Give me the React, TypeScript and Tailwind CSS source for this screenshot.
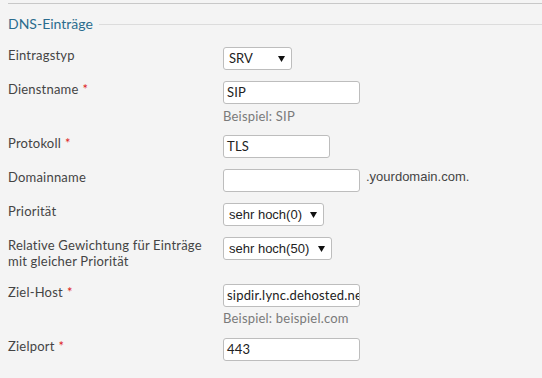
import React from "react";

const labelFont = { fontFamily: "Lato, 'Liberation Sans', sans-serif" };

function Label({ text, req }: { text: React.ReactNode; req?: boolean }) {
  return (
    <div className="w-[215px] shrink-0 text-[13px] leading-[16px] tracking-[0.2px] text-[#444]">
      {text}
      {req && <span className="text-[#d22] ml-[4px]">*</span>}
    </div>
  );
}

function Input({ value, w }: { value: string; w: string }) {
  return (
    <div
      className={`${w} h-[23px] bg-white border border-[#bdbdbd] rounded-[3px] pl-[3px] flex items-center overflow-hidden whitespace-nowrap text-[13px] tracking-[0.2px] text-[#222]`}
    >
      {value}
    </div>
  );
}

function Select({ value, w, arial }: { value: string; w: string; arial?: boolean }) {
  return (
    <div
      className={`${w} h-[23px] bg-white border border-[#bdbdbd] rounded-[3px] pl-[5px] pr-[6px] flex items-center justify-between whitespace-nowrap text-[13px] text-[#222]`}
      style={arial ? { fontFamily: "'Liberation Sans', Arial, sans-serif" } : undefined}
    >
      <span>{value}</span>
      <svg width="7" height="7" viewBox="0 0 7 7">
        <path d="M0 1 L7 1 L3.5 7 Z" fill="#111" />
      </svg>
    </div>
  );
}

function Help({ text, mt }: { text: string; mt: string }) {
  return (
    <div className={`${mt} text-[13px] leading-[16px] tracking-[0.2px] text-[#7a7a7a]`}>{text}</div>
  );
}

export default function App() {
  return (
    <div className="min-h-screen bg-[#f4f4f4] pl-2 pt-[3px]" style={labelFont}>
      <div className="h-px bg-[#c8c8c8]" />
      <div className="mt-[12px] flex items-center h-[16px]">
        <span className="text-[14px] leading-[16px] text-[#2b6c8e]">DNS-Einträge</span>
        <div className="flex-1 h-px bg-[#dcdcdc] ml-[6px]" />
      </div>

      <div className="mt-[15px] flex items-start mb-[11px]">
        <Label text="Eintragstyp" />
        <Select value="SRV" w="w-[69px]" />
      </div>

      <div className="flex items-start mb-[11px]">
        <Label text="Dienstname" req />
        <div>
          <Input value="SIP" w="w-[137px]" />
          <Help text="Beispiel: SIP" mt="mt-[4px]" />
        </div>
      </div>

      <div className="flex items-start mb-[11px]">
        <Label text="Protokoll" req />
        <Input value="TLS" w="w-[107px]" />
      </div>

      <div className="flex items-start mb-[11px]">
        <Label text="Domainname" />
        <Input value="" w="w-[137px]" />
        <span
          className="ml-[6px] text-[13px] leading-[16px] text-[#444]"
          style={{ fontFamily: "'Liberation Sans', Arial, sans-serif" }}
        >
          .yourdomain.com.
        </span>
      </div>

      <div className="flex items-start mb-[11px]">
        <Label text="Priorität" />
        <Select value="sehr hoch(0)" w="w-[101px]" arial />
      </div>

      <div className="flex items-start mb-[15px]">
        <Label
          text={
            <>
              Relative Gewichtung für Einträge
              <br />
              mit gleicher Priorität
            </>
          }
        />
        <Select value="sehr hoch(50)" w="w-[109px]" arial />
      </div>

      <div className="flex items-start mb-[12px]">
        <Label text="Ziel-Host" req />
        <div>
          <Input value="sipdir.lync.dehosted.net" w="w-[137px]" />
          <Help text="Beispiel: beispiel.com" mt="mt-[3px]" />
        </div>
      </div>

      <div className="flex items-start">
        <Label text="Zielport" req />
        <Input value="443" w="w-[137px]" />
      </div>
    </div>
  );
}
